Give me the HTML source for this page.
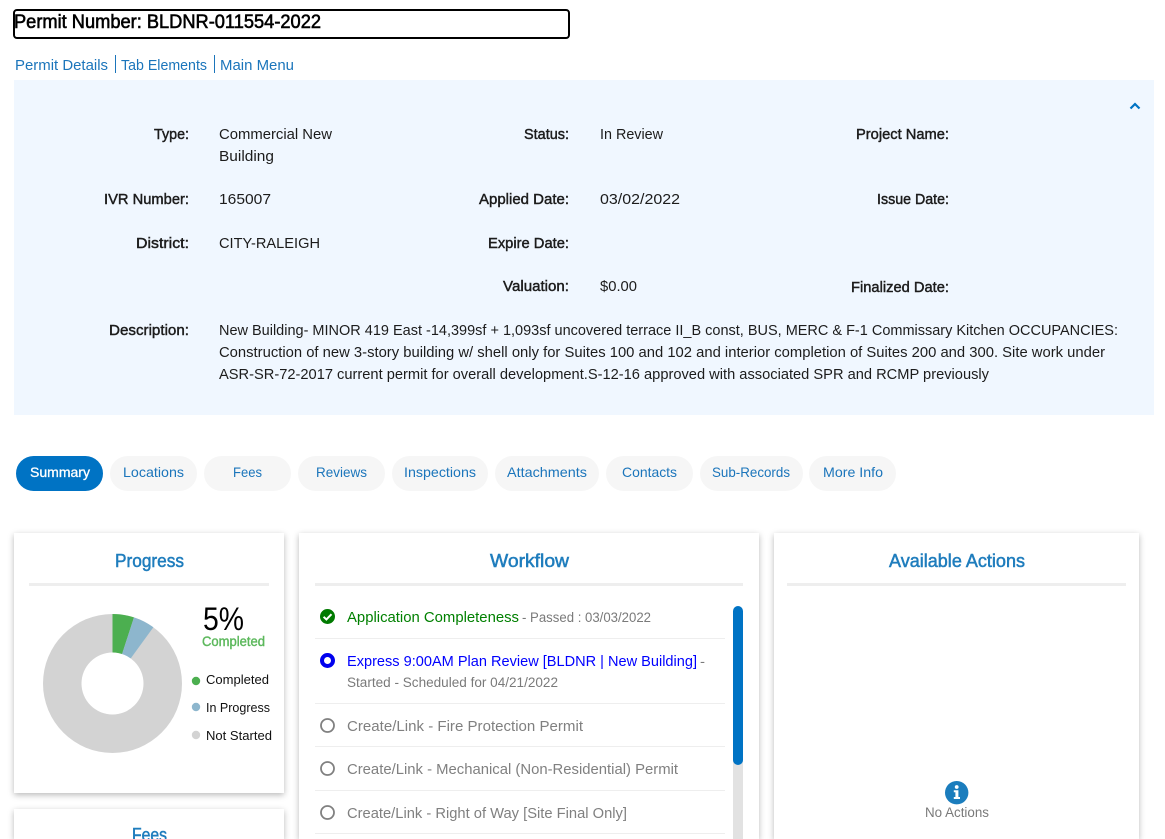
<!DOCTYPE html>
<html lang="en">
<head>
<meta charset="utf-8">
<title>Permit BLDNR-011554-2022</title>
<style>
html,body{margin:0;padding:0;background:#fff;width:1165px;height:839px;overflow:hidden}
#page{position:relative;width:1165px;height:839px;overflow:hidden;background:#fff}
.b{position:absolute;box-sizing:border-box}
.card{background:#fff;box-shadow:0 2px 6px rgba(0,0,0,.28)}
.tab{top:456px;height:35px;border-radius:18px;background:#f6f6f6}
svg{position:absolute;left:0;top:0}
text{font-family:"Liberation Sans",sans-serif;font-size:15px;fill:#1c1c1c}
.m{stroke:#1c1c1c;stroke-width:.45px}
.l{fill:#1b75bb;font-size:15px}
.t{fill:#1b75bb;font-size:14px}
.h{fill:#1f7dbd;font-size:18px;stroke:#1f7dbd;stroke-width:.5px}
.g{fill:#7a7a7a;font-size:13.5px}
.c{fill:#808080;font-size:15px}
.s{font-size:13px;fill:#111}
</style>
</head>
<body>
<div id="page">
<div class="b" style="left:13px;top:9px;width:557px;height:30px;border:2px solid #000;border-radius:4px"></div>
<div class="b" style="left:14px;top:80px;width:1140px;height:335px;background:#f0f7ff"></div>

<div class="b tab" style="left:16px;width:87px;background:#0073c4"></div>
<div class="b tab" style="left:110px;width:87px"></div>
<div class="b tab" style="left:204px;width:87px"></div>
<div class="b tab" style="left:298px;width:87px"></div>
<div class="b tab" style="left:392px;width:96px"></div>
<div class="b tab" style="left:495px;width:104px"></div>
<div class="b tab" style="left:606px;width:87px"></div>
<div class="b tab" style="left:700px;width:103px"></div>
<div class="b tab" style="left:809px;width:87px"></div>

<div class="b card" style="left:14px;top:533px;width:270px;height:260px"></div>
<div class="b card" style="left:14px;top:809px;width:270px;height:30px"></div>
<div class="b card" style="left:299px;top:533px;width:460px;height:306px"></div>
<div class="b card" style="left:774px;top:533px;width:365px;height:306px"></div>

<svg width="1165" height="839" viewBox="0 0 1165 839" xmlns="http://www.w3.org/2000/svg">
<text x="14" y="28" style="font-size:19.5px;fill:#000;stroke:#000;stroke-width:.6px" textLength="307" lengthAdjust="spacingAndGlyphs">Permit Number: BLDNR-011554-2022</text>

<text class="l" x="15" y="70" textLength="93" lengthAdjust="spacingAndGlyphs">Permit Details</text>
<rect x="115" y="55" width="1" height="18" fill="#1b75bb"/>
<text class="l" x="121" y="70" textLength="86" lengthAdjust="spacingAndGlyphs">Tab Elements</text>
<rect x="214" y="55" width="1" height="18" fill="#1b75bb"/>
<text class="l" x="220" y="70" textLength="74" lengthAdjust="spacingAndGlyphs">Main Menu</text>

<path d="M1130.5 108.5 L1135 104 L1139.5 108.5" fill="none" stroke="#0073c4" stroke-width="2.2"/>

<text class="m" x="154" y="139" textLength="35" lengthAdjust="spacingAndGlyphs">Type:</text>
<text class="m" x="104" y="204" textLength="85" lengthAdjust="spacingAndGlyphs">IVR Number:</text>
<text class="m" x="136" y="248" textLength="53" lengthAdjust="spacingAndGlyphs">District:</text>
<text class="m" x="109" y="335" textLength="80" lengthAdjust="spacingAndGlyphs">Description:</text>
<text x="219" y="139" textLength="113" lengthAdjust="spacingAndGlyphs">Commercial New</text>
<text x="219" y="161" textLength="55" lengthAdjust="spacingAndGlyphs">Building</text>
<text x="219" y="204" textLength="52" lengthAdjust="spacingAndGlyphs">165007</text>
<text x="219" y="248" textLength="101" lengthAdjust="spacingAndGlyphs">CITY-RALEIGH</text>

<text class="m" x="524" y="139" textLength="45" lengthAdjust="spacingAndGlyphs">Status:</text>
<text class="m" x="479" y="204" textLength="90" lengthAdjust="spacingAndGlyphs">Applied Date:</text>
<text class="m" x="488" y="248" textLength="81" lengthAdjust="spacingAndGlyphs">Expire Date:</text>
<text class="m" x="503" y="291" textLength="66" lengthAdjust="spacingAndGlyphs">Valuation:</text>
<text x="600" y="139" textLength="63" lengthAdjust="spacingAndGlyphs">In Review</text>
<text x="600" y="204" textLength="80" lengthAdjust="spacingAndGlyphs">03/02/2022</text>
<text x="600" y="291" textLength="37" lengthAdjust="spacingAndGlyphs">$0.00</text>

<text class="m" x="856" y="139" textLength="93" lengthAdjust="spacingAndGlyphs">Project Name:</text>
<text class="m" x="877" y="204" textLength="72" lengthAdjust="spacingAndGlyphs">Issue Date:</text>
<text class="m" x="851" y="292" textLength="98" lengthAdjust="spacingAndGlyphs">Finalized Date:</text>

<text x="219" y="335" textLength="899" lengthAdjust="spacingAndGlyphs">New Building- MINOR 419 East -14,399sf + 1,093sf uncovered terrace II_B const, BUS, MERC &amp; F-1 Commissary Kitchen OCCUPANCIES:</text>
<text x="219" y="357" textLength="886" lengthAdjust="spacingAndGlyphs">Construction of new 3-story building w/ shell only for Suites 100 and 102 and interior completion of Suites 200 and 300. Site work under</text>
<text x="219" y="379" textLength="770" lengthAdjust="spacingAndGlyphs">ASR-SR-72-2017 current permit for overall development.S-12-16 approved with associated SPR and RCMP previously</text>

<text x="30" y="477" style="font-size:14px;fill:#fff;stroke:#fff;stroke-width:.3px" textLength="60" lengthAdjust="spacingAndGlyphs">Summary</text>
<text class="t" x="123" y="477" textLength="61" lengthAdjust="spacingAndGlyphs">Locations</text>
<text class="t" x="233" y="477" textLength="29" lengthAdjust="spacingAndGlyphs">Fees</text>
<text class="t" x="316" y="477" textLength="51" lengthAdjust="spacingAndGlyphs">Reviews</text>
<text class="t" x="404" y="477" textLength="72" lengthAdjust="spacingAndGlyphs">Inspections</text>
<text class="t" x="507" y="477" textLength="80" lengthAdjust="spacingAndGlyphs">Attachments</text>
<text class="t" x="622" y="477" textLength="55" lengthAdjust="spacingAndGlyphs">Contacts</text>
<text class="t" x="712" y="477" textLength="78" lengthAdjust="spacingAndGlyphs">Sub-Records</text>
<text class="t" x="823" y="477" textLength="60" lengthAdjust="spacingAndGlyphs">More Info</text>

<!-- Progress -->
<text class="h" x="115" y="567" textLength="69" lengthAdjust="spacingAndGlyphs">Progress</text>
<rect x="29" y="583" width="240" height="3" fill="#eeeeee"/>
<circle cx="112.5" cy="683.5" r="69.5" fill="#d3d3d3"/>
<path d="M112.5 683.5 L112.5 614 A69.5 69.5 0 0 1 133.98 617.4 Z" fill="#4caf50"/>
<path d="M112.5 683.5 L133.98 617.4 A69.5 69.5 0 0 1 153.35 627.27 Z" fill="#8db6cd"/>
<circle cx="112.5" cy="683.5" r="31" fill="#fff"/>
<text x="203" y="630" style="font-size:32px;fill:#000" textLength="41" lengthAdjust="spacingAndGlyphs">5%</text>
<text x="202" y="646" style="font-size:13.5px;fill:#5cb85c;stroke:#5cb85c;stroke-width:.4px" textLength="63" lengthAdjust="spacingAndGlyphs">Completed</text>
<circle cx="196" cy="681" r="4.2" fill="#4caf50"/>
<circle cx="196" cy="707" r="4.2" fill="#8db6cd"/>
<circle cx="196" cy="735" r="4.2" fill="#d3d3d3"/>
<text class="s" x="206" y="684" textLength="63" lengthAdjust="spacingAndGlyphs">Completed</text>
<text class="s" x="206" y="712" textLength="64" lengthAdjust="spacingAndGlyphs">In Progress</text>
<text class="s" x="206" y="740" textLength="66" lengthAdjust="spacingAndGlyphs">Not Started</text>

<!-- Workflow -->
<text class="h" x="490" y="567" textLength="79" lengthAdjust="spacingAndGlyphs">Workflow</text>
<rect x="315" y="583" width="428" height="3" fill="#eeeeee"/>
<rect x="733" y="700" width="10" height="139" fill="#e2e2e2"/>
<rect x="733" y="606" width="10" height="159" rx="5" fill="#0073c4"/>
<g fill="#eeeeee">
<rect x="315" y="638" width="410" height="1"/>
<rect x="315" y="703" width="410" height="1"/>
<rect x="315" y="746" width="410" height="1"/>
<rect x="315" y="790" width="410" height="1"/>
<rect x="315" y="833" width="410" height="1"/>
</g>
<circle cx="327.5" cy="616.5" r="7.5" fill="#007a00"/>
<path d="M323.6 616.8 L326.4 619.5 L331.5 614.2" fill="none" stroke="#fff" stroke-width="2"/>
<text x="347" y="622" style="font-size:15px;fill:#008000" textLength="172" lengthAdjust="spacingAndGlyphs">Application Completeness</text>
<text class="g" x="522" y="622" textLength="129" lengthAdjust="spacingAndGlyphs">- Passed : 03/03/2022</text>
<circle cx="327.5" cy="660.5" r="5.5" fill="#fff" stroke="#0000ee" stroke-width="4"/>
<text x="347" y="666" style="font-size:15px;fill:#0000ff" textLength="350" lengthAdjust="spacingAndGlyphs">Express 9:00AM Plan Review [BLDNR | New Building]</text>
<text class="g" x="700" y="666" textLength="5" lengthAdjust="spacingAndGlyphs">-</text>
<text class="g" x="347" y="687" textLength="211" lengthAdjust="spacingAndGlyphs">Started - Scheduled for 04/21/2022</text>
<g fill="none" stroke="#808080" stroke-width="1.8">
<circle cx="327.5" cy="725.5" r="6.5"/>
<circle cx="327.5" cy="768.5" r="6.5"/>
<circle cx="327.5" cy="812.5" r="6.5"/>
</g>
<text class="c" x="347" y="731" textLength="236" lengthAdjust="spacingAndGlyphs">Create/Link - Fire Protection Permit</text>
<text class="c" x="347" y="774" textLength="331" lengthAdjust="spacingAndGlyphs">Create/Link - Mechanical (Non-Residential) Permit</text>
<text class="c" x="347" y="818" textLength="280" lengthAdjust="spacingAndGlyphs">Create/Link - Right of Way [Site Final Only]</text>

<!-- Actions -->
<text class="h" x="889" y="567" textLength="136" lengthAdjust="spacingAndGlyphs">Available Actions</text>
<rect x="787" y="583" width="339" height="3" fill="#eeeeee"/>
<circle cx="956.7" cy="792.7" r="11.7" fill="#1b7dbd"/>
<circle cx="956.7" cy="787" r="1.9" fill="#fff"/>
<path d="M953.8 790.3 H958.4 V797 H960 V799 H953.8 V797 H955.4 V792.3 H953.8 Z" fill="#fff"/>
<text class="g" x="925" y="817" textLength="64" lengthAdjust="spacingAndGlyphs">No Actions</text>
</svg>

<div class="b" style="left:120px;top:824px;width:60px;height:15px;overflow:hidden">
<svg width="60" height="15" viewBox="120 824 60 15" xmlns="http://www.w3.org/2000/svg"><text class="h" x="132" y="841" textLength="35" lengthAdjust="spacingAndGlyphs">Fees</text></svg>
</div>
</div>
</body>
</html>
